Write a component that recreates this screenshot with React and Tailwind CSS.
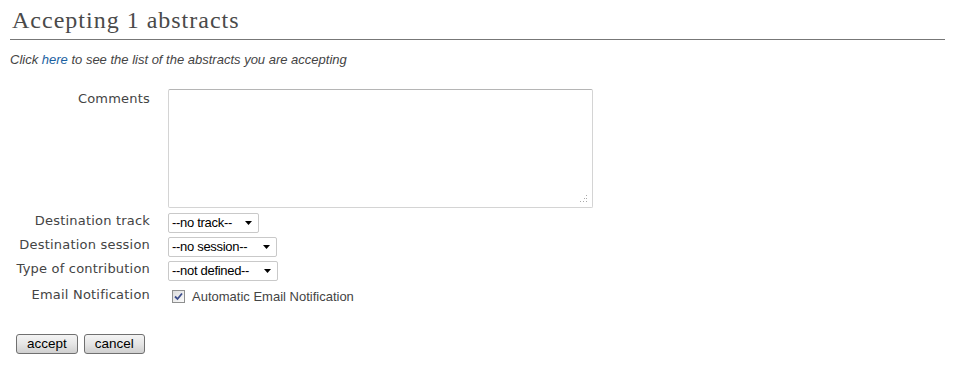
import React from 'react';

const labelCls = "w-[140px] shrink-0 text-right text-[13px] tracking-[0.2px] text-[#444] font-['DejaVu_Sans',sans-serif]";

const Select = ({ value, width }) => (
  <div className={`flex items-center h-[20px] ${width} border border-[#c9c9c9] bg-white rounded-[2px] pl-[3px] pr-[6px]`}>
    <span className="flex-1 text-[13px] text-black font-['Liberation_Sans',Arial,sans-serif] whitespace-nowrap leading-none tracking-[-0.3px]">{value}</span>
    <svg width="7" height="4" viewBox="0 0 7 4" className="shrink-0">
      <path d="M0 0 H7 L3.5 4 Z" fill="#000" />
    </svg>
  </div>
);

const Button = ({ children }) => (
  <button className="h-[20px] px-[10px] border border-[#707070] rounded-[3px] bg-gradient-to-b from-[#f4f4f4] via-[#e6e6e6] to-[#cfcfcf] text-[13.5px] text-black font-['Liberation_Sans',Arial,sans-serif] leading-none">
    {children}
  </button>
);

const App = () => {
  const rows = [
    { label: "Destination track", value: "--no track--", width: "w-[91px]" },
    { label: "Destination session", value: "--no session--", width: "w-[109px]" },
    { label: "Type of contribution", value: "--not defined--", width: "w-[110px]" },
  ];

  return (
    <div className="w-[955px] h-[386px] bg-white px-[10px] pt-[6px]">
      <h1 className="pl-[2px] text-[24px] leading-[28px] tracking-[1px] text-[#4a4a4a] font-['Liberation_Serif',Georgia,serif] pb-[5px] border-b border-[#777] w-[935px]">
        Accepting 1 abstracts
      </h1>
      <p className="mt-[10px] text-[13px] italic text-[#444] font-['Liberation_Sans',Arial,sans-serif]">
        Click <a className="text-[#1a5fa0]">here</a> to see the list of the abstracts you are accepting
      </p>

      <div className="mt-[19px] flex flex-col">
        <div className="flex">
          <div className={`${labelCls} mt-[0px]`}>Comments</div>
          <div className="ml-[18px] relative w-[425px] h-[119px] border border-[#d4d4d4] border-t-[#b5b5b5] rounded-[2px] bg-white">
            <svg width="8" height="8" viewBox="0 0 8 8" className="absolute right-[4px] bottom-[4px]">
              <g fill="#aaa">
                <rect x="6" y="0" width="1" height="1" />
                <rect x="4" y="3" width="1" height="1" />
                <rect x="6" y="3" width="1" height="1" />
                <rect x="0" y="6" width="1" height="1" />
                <rect x="3" y="6" width="1" height="1" />
                <rect x="6" y="6" width="1" height="1" />
              </g>
            </svg>
          </div>
        </div>

        {rows.map((r, i) => (
          <div key={i} className={`flex items-center ${i === 0 ? 'mt-[5px]' : 'mt-[4px]'}`}>
            <div className={`${labelCls} -mt-[3px]`}>{r.label}</div>
            <div className="ml-[18px]">
              <Select value={r.value} width={r.width} />
            </div>
          </div>
        ))}

        <div className="flex items-center mt-[6px]">
          <div className={`${labelCls} -mt-[4px]`}>Email Notification</div>
          <div className="ml-[22px] flex items-center">
            <div className="w-[13px] h-[13px] border border-[#8e8f8f] bg-gradient-to-br from-[#dcdcdc] to-[#fbfbfb] flex items-center justify-center">
              <svg width="9" height="9" viewBox="0 0 9 9">
                <path d="M1 4.5 L3.5 7 L8 1.5" stroke="#3d4e8c" strokeWidth="1.8" fill="none" />
              </svg>
            </div>
            <span className="ml-[7px] text-[13px] text-[#444] font-['Liberation_Sans',Arial,sans-serif]">Automatic Email Notification</span>
          </div>
        </div>
      </div>

      <div className="mt-[28px] ml-[6px] flex gap-[6px]">
        <Button>accept</Button>
        <Button>cancel</Button>
      </div>
    </div>
  );
};

export default App;
